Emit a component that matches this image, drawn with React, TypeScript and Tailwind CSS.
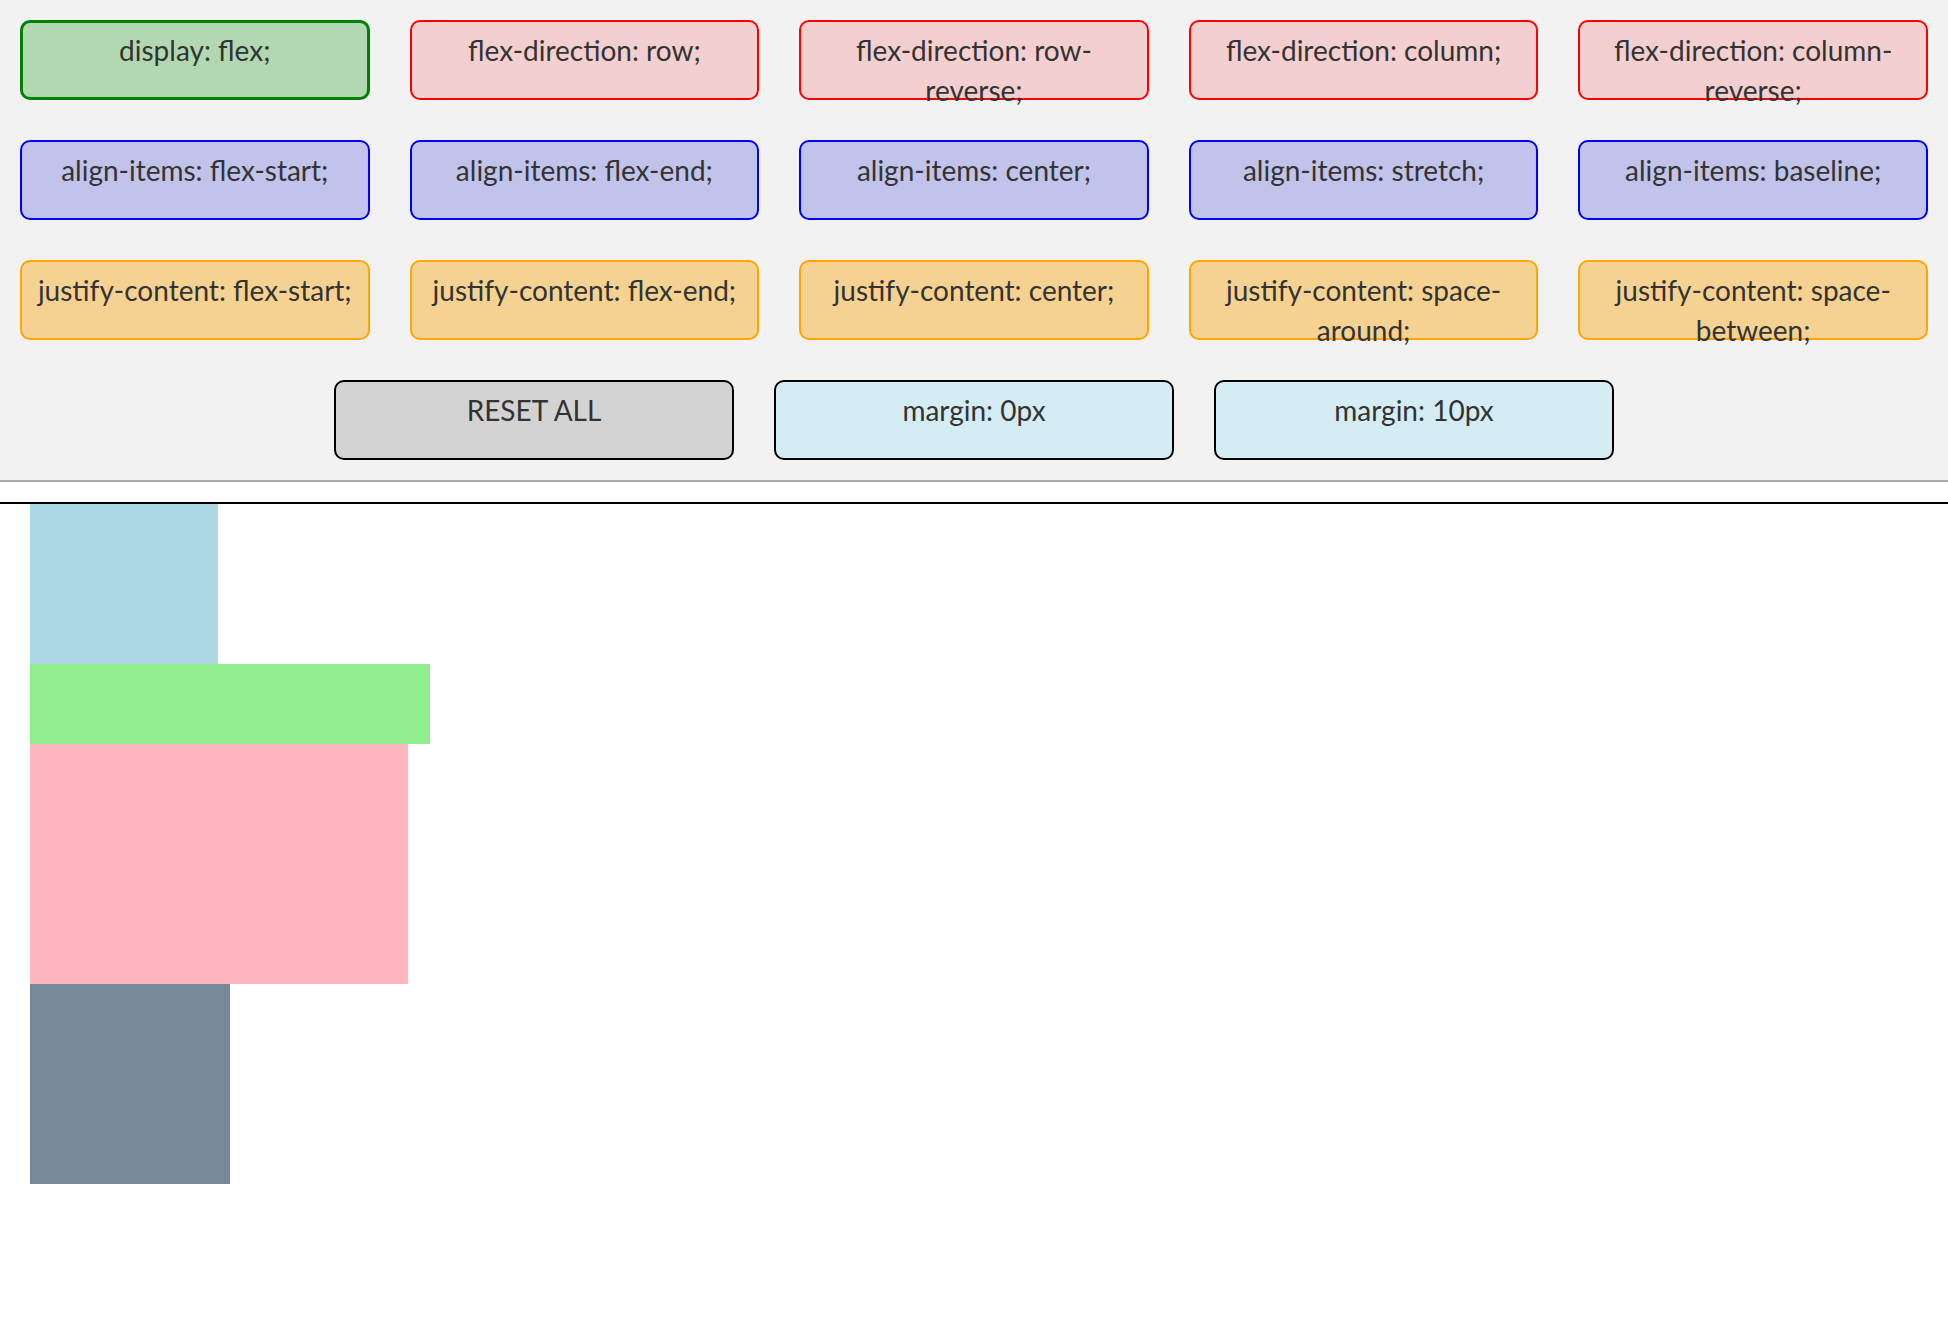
import React from 'react';

type Tone = 'display' | 'direction' | 'align' | 'justify';

const toneClass: Record<Tone, string> = {
  display: 'border-[3px] border-[#008000] bg-[#b2d8b2] pt-[7px]',
  direction: 'border-2 border-[#ff0000] bg-[#f4cfcf] pt-[8px]',
  align: 'border-2 border-[#0000ff] bg-[#c1c3eb] pt-[8px]',
  justify: 'border-2 border-[#ffa500] bg-[#f6d292] pt-[8px]',
};

const controls: { label: string; tone: Tone }[] = [
  { label: 'display: flex;', tone: 'display' },
  { label: 'flex-direction: row;', tone: 'direction' },
  { label: 'flex-direction: row-reverse;', tone: 'direction' },
  { label: 'flex-direction: column;', tone: 'direction' },
  { label: 'flex-direction: column-reverse;', tone: 'direction' },
  { label: 'align-items: flex-start;', tone: 'align' },
  { label: 'align-items: flex-end;', tone: 'align' },
  { label: 'align-items: center;', tone: 'align' },
  { label: 'align-items: stretch;', tone: 'align' },
  { label: 'align-items: baseline;', tone: 'align' },
  { label: 'justify-content: flex-start;', tone: 'justify' },
  { label: 'justify-content: flex-end;', tone: 'justify' },
  { label: 'justify-content: center;', tone: 'justify' },
  { label: 'justify-content: space-around;', tone: 'justify' },
  { label: 'justify-content: space-between;', tone: 'justify' },
];

// 控制按钮
const Control: React.FC<{ label: string; tone: Tone }> = ({ label, tone }) => (
  <div
    className={`m-[20px] h-[80px] rounded-[10px] px-[10px] text-center text-[28px] leading-[40px] text-[#333] ${toneClass[tone]}`}
  >
    {label}
  </div>
);

const bottomBtn =
  'm-[20px] h-[80px] w-[400px] rounded-[10px] border-2 border-black pt-[8px] text-center text-[28px] leading-[40px] text-[#333]';

export default function App() {
  return (
    <div className="min-h-[1320px] bg-white" style={{ fontFamily: 'Lato, "Noto Sans", sans-serif' }}>
      <div className="border-b-2 border-[#aaaaaa] bg-[#f2f2f2]">
        <div className="grid grid-cols-5">
          {controls.map((c) => (
            <Control key={c.label} label={c.label} tone={c.tone} />
          ))}
        </div>
        <div className="flex justify-center">
          <div className={`${bottomBtn} bg-[#d3d3d3]`}>RESET ALL</div>
          <div className={`${bottomBtn} bg-[#d4edf4]`}>margin: 0px</div>
          <div className={`${bottomBtn} bg-[#d4edf4]`}>margin: 10px</div>
        </div>
      </div>
      <div className="mt-[20px] flex flex-col items-start border-t-2 border-black pl-[30px]">
        <div className="h-[160px] w-[188px] bg-[#add8e6]" />
        <div className="h-[80px] w-[400px] bg-[#90ee90]" />
        <div className="h-[240px] w-[378px] bg-[#ffb6c1]" />
        <div className="h-[200px] w-[200px] bg-[#778899]" />
      </div>
    </div>
  );
}
